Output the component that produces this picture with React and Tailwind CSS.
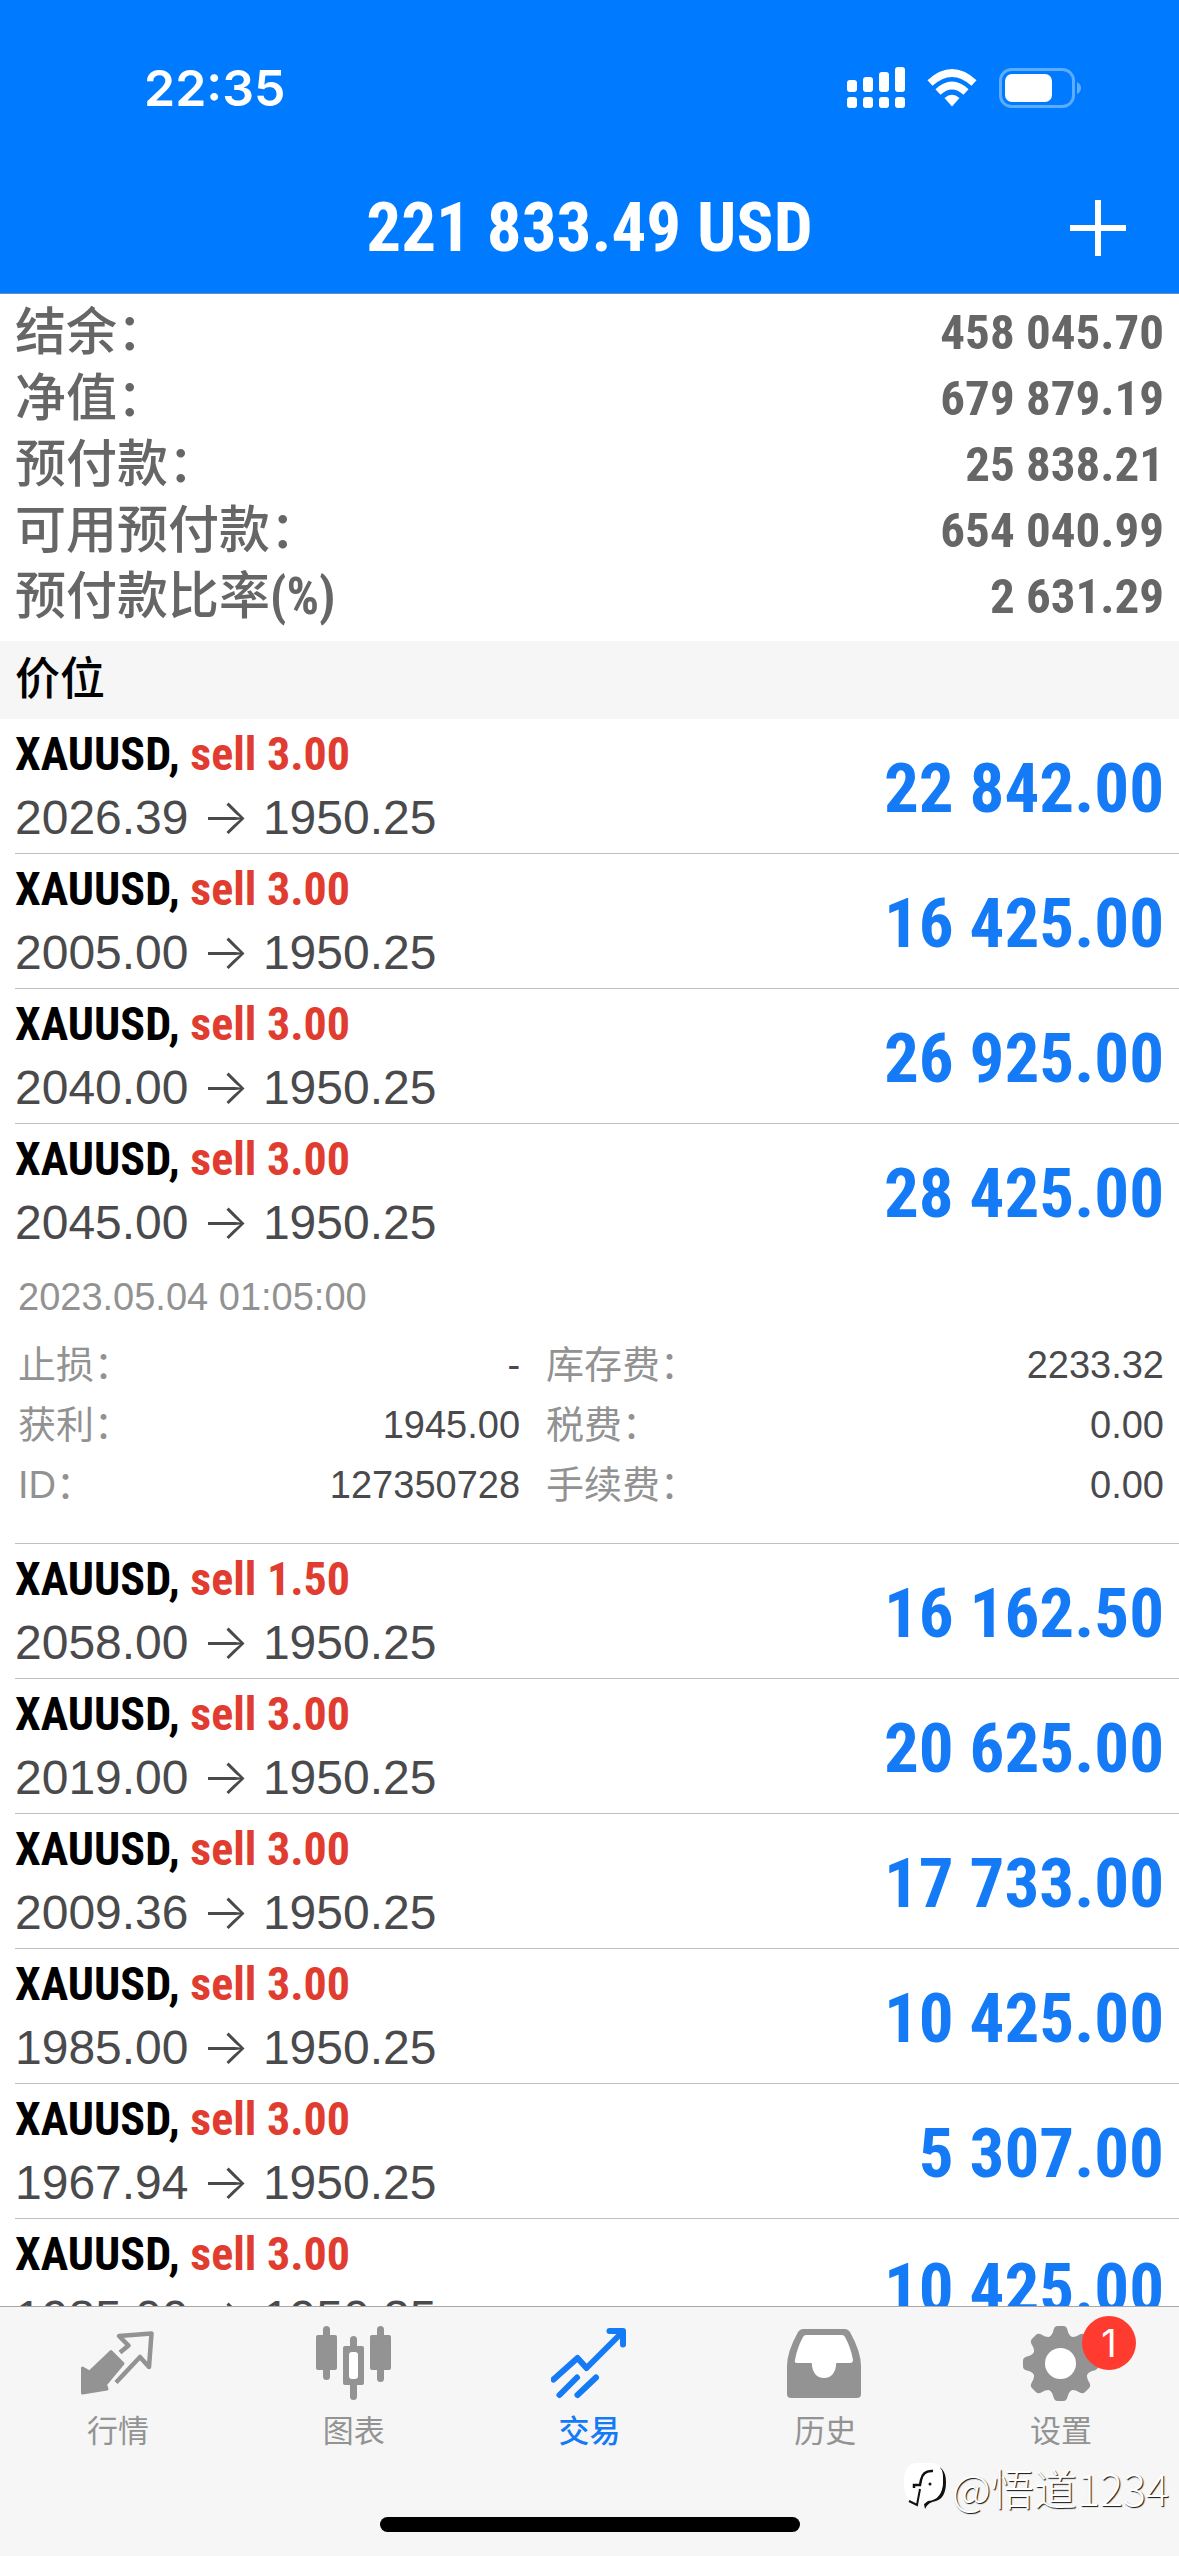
import { clsx } from "clsx";

const account = [
  { label: "结余：", value: "458 045.70" },
  { label: "净值：", value: "679 879.19" },
  { label: "预付款：", value: "25 838.21" },
  { label: "可用预付款：", value: "654 040.99" },
  { label: "预付款比率", unit: "(%)", value: "2 631.29" },
];

const positions = [
  { id: 1, side: "sell 3.00", open: "2026.39", profit: "22 842.00" },
  { id: 2, side: "sell 3.00", open: "2005.00", profit: "16 425.00" },
  { id: 3, side: "sell 3.00", open: "2040.00", profit: "26 925.00" },
  {
    id: 4,
    side: "sell 3.00",
    open: "2045.00",
    profit: "28 425.00",
    time: "2023.05.04 01:05:00",
    details: [
      ["止损：", "-"],
      ["库存费：", "2233.32"],
      ["获利：", "1945.00"],
      ["税费：", "0.00"],
      ["ID：", "127350728"],
      ["手续费：", "0.00"],
    ],
  },
  { id: 5, side: "sell 1.50", open: "2058.00", profit: "16 162.50" },
  { id: 6, side: "sell 3.00", open: "2019.00", profit: "20 625.00" },
  { id: 7, side: "sell 3.00", open: "2009.36", profit: "17 733.00" },
  { id: 8, side: "sell 3.00", open: "1985.00", profit: "10 425.00" },
  { id: 9, side: "sell 3.00", open: "1967.94", profit: "5 307.00" },
  { id: 10, side: "sell 3.00", open: "1985.00", profit: "10 425.00" },
];

const QuotesIcon = () => (
  <svg viewBox="0 0 76 76" className="size-[76px]" fill="none" stroke="currentColor" strokeLinejoin="round">
    <path
      d="M2.5 42 9.5 46 31 25.500 43 37.500 25.500 58.500 27 63 2.500 67Z"
      fill="currentColor"
      strokeWidth="3"
    />
    <path d="M40 26.500 48.500 19.500 39 10 71.500 7.500 69 41 60 31 36 56.500" strokeWidth="4.500" />
  </svg>
);

const ChartIcon = () => (
  <svg viewBox="0 0 76 76" className="size-[76px]" fill="currentColor">
    <rect x="7" y="0" width="7" height="54" rx="3.500" />
    <rect x="0" y="9" width="21" height="35" rx="2" />
    <rect x="34" y="10" width="7" height="64" rx="3.500" />
    <rect x="27" y="20" width="21" height="39" rx="2" />
    <rect x="33" y="26" width="9" height="27" rx="3" fill="white" />
    <rect x="61" y="0" width="7" height="56" rx="3.500" />
    <rect x="54" y="9" width="21" height="35" rx="2" />
  </svg>
);

const TradeIcon = () => (
  <svg
    viewBox="0 0 76 76"
    className="size-[76px]"
    fill="none"
    stroke="currentColor"
    strokeWidth="6"
    strokeLinecap="round"
    strokeLinejoin="round"
  >
    <path d="M2.500 53.500 26.500 32 35.500 42 71.500 6" />
    <path d="M58.500 5H72V18.500" />
    <path d="M8.500 69 26 51.500M26.500 69 45 51.500" />
  </svg>
);

const HistoryIcon = () => (
  <svg viewBox="0 0 76 76" className="size-[76px]" fill="currentColor">
    <path d="M16 3H58Q61 3 63 6 74 26 74 40V68Q74 72 70 72H4Q0 72 0 68V40Q0 26 11 6 13 3 16 3Z" />
    <path
      d="M19 9H55Q57 9 58 11 64 22 66 34 66 37 63 37H49.500Q49 37 49 40 47 52 37 52 27 52 25 40 25 37 24.500 37H10Q7 37 8 34 10 22 16 11 17 9 19 9Z"
      fill="white"
    />
  </svg>
);

const SettingsIcon = () => (
  <svg viewBox="0 0 76 76" className="size-[76px]" fill="currentColor">
    <circle cx="37.500" cy="37.500" r="29" />
    {[0, 45, 90, 135, 180, 225, 270, 315].map((angle) => (
      <path
        key={angle}
        d="M24.500 12.500Q29.500 9.500 30.500 4 31.500 0 34.500 0H40.500Q43.500 0 44.500 4 45.500 9.500 50.500 12.500Z"
        transform={`rotate(${angle} 37.5 37.5)`}
      />
    ))}
    <circle cx="37.500" cy="37.500" r="15.500" fill="white" />
  </svg>
);

const tabs = [
  { label: "行情", Icon: QuotesIcon },
  { label: "图表", Icon: ChartIcon },
  { label: "交易", Icon: TradeIcon, active: true },
  { label: "历史", Icon: HistoryIcon },
  { label: "设置", Icon: SettingsIcon, badge: 1 },
];

const StatusBar = () => (
  <div className="flex items-center justify-between pt-[56px] pr-24 pl-36">
    <span className="font-['Inter','Noto_Sans_CJK_SC',sans-serif] text-[50px] leading-[64px] font-semibold">
      22:35
    </span>
    <div className="flex items-center gap-[22px]">
      <svg viewBox="0 0 58 42" className="h-[42px] w-[58px]" fill="currentColor">
        <rect x="0" y="13" width="10" height="12" rx="3" />
        <rect x="16" y="10" width="10" height="15" rx="3" />
        <rect x="32" y="5" width="10" height="20" rx="3" />
        <rect x="48" y="0" width="10" height="25" rx="3" />
        <rect x="0" y="30" width="10" height="11" rx="3" />
        <rect x="16" y="30" width="10" height="11" rx="3" />
        <rect x="32" y="30" width="10" height="11" rx="3" />
        <rect x="48" y="30" width="10" height="11" rx="3" />
      </svg>
      <svg viewBox="0 0 50 38" className="h-[38px] w-[50px]" fill="none" stroke="currentColor" strokeWidth="7.500">
        <path d="M3 14Q25 -6 47 14" />
        <path d="M11 23Q25 10 39 23" />
        <path d="M17.500 29Q25 22.500 32.500 29L25 37.500Z" fill="currentColor" stroke="none" />
      </svg>
      <svg viewBox="0 0 84 40" className="h-[40px] w-[84px]">
        <rect x="1.500" y="1.500" width="73" height="37" rx="11" fill="none" stroke="#5cacff" strokeWidth="3" />
        <rect x="6" y="6" width="47" height="28" rx="7" fill="white" />
        <path d="M78 14Q82 16 82 20 82 24 78 26Z" fill="#5cacff" />
      </svg>
    </div>
  </div>
);

const Position = ({ side, open, profit, time, details }) => (
  <li className="ml-[15px] border-b border-[#c0c0c4] pt-[3px] pr-[15px]">
    <div className="flex justify-between">
      <div>
        <p className="font-['Roboto_Condensed','Liberation_Sans_Narrow',sans-serif] text-[46px] leading-[64px] font-bold text-black">
          XAUUSD, <span className="text-[#e03c2f]">{side}</span>
        </p>
        <p className="text-[48px] leading-[64px] text-[#4a4a4c]">
          {open} <span className="font-['Inter',sans-serif] text-[50px] leading-none font-light">→</span> 1950.25
        </p>
      </div>
      <p className="pt-[3px] font-['Roboto_Condensed','Liberation_Sans_Narrow',sans-serif] text-[69px] leading-[128px] font-bold text-[#147af5]">
        {profit}
      </p>
    </div>

    {details && (
      <div className="pt-[9px] pb-7 pl-[3px] text-[38px] leading-[60px] text-[#929292]">
        <p>{time}</p>
        <dl className="mt-2 grid grid-cols-[13fr_16fr] gap-x-[26px]">
          {details.map(([label, value]) => (
            <div key={label} className="flex justify-between">
              <dt>{label}</dt>
              <dd className="text-[#4a4a4c]">{value}</dd>
            </div>
          ))}
        </dl>
      </div>
    )}
  </li>
);

const Watermark = () => (
  <div className="absolute right-[10px] bottom-[44px] flex items-center gap-1 text-white">
    <svg viewBox="0 0 44 50" className="h-[50px] w-[44px]">
      <path
        d="M14 3H28Q42 4 42 20 42 36 32 39 24 40 21 47L20 42 23 38Q36 37 38 27 40 18 38 8Z"
        fill="#111"
      />
      <path d="M13 1H27Q39 1 39 18 39 38 24 39L20 42 6 38Q0 35 0 20 0 1 13 1Z" fill="white" />
      <path d="M29 9Q19 8 17 18L16 23H10V26" fill="none" stroke="#111" strokeWidth="2.500" />
      <path d="M16 27 13 43 5 39" fill="none" stroke="#111" strokeWidth="2" />
      <circle cx="26" cy="22" r="1.500" fill="#111" />
    </svg>
    <span className="font-['Noto_Sans_CJK_SC',sans-serif] text-[43px] leading-[50px] font-light [text-shadow:1px_1px_1px_#111]">
      @悟道1234
    </span>
  </div>
);

const App = () => {
  return (
    <div
      lang="zh-CN"
      className="flex h-screen flex-col bg-white font-['Liberation_Sans','Noto_Sans_CJK_SC',sans-serif]"
    >
      <header className="border-b border-[#5b8fc9] bg-[#007aff] pb-[17px] text-white">
        <StatusBar />
        <div className="grid grid-cols-[1fr_auto_1fr] items-center pt-[60px] pr-[53px] pl-[53px]">
          <h1 className="col-start-2 font-['Roboto_Condensed','Liberation_Sans_Narrow',sans-serif] text-[69px] leading-[96px] font-bold">
            221 833.49 USD
          </h1>
          <button type="button" aria-label="新订单" className="justify-self-end">
            <svg viewBox="0 0 56 56" className="size-[56px]" stroke="currentColor" strokeWidth="6">
              <path d="M28 0V56M0 28H56" />
            </svg>
          </button>
        </div>
      </header>

      <main className="min-h-0 flex-1 overflow-y-auto [scrollbar-width:none]">
        <dl className="px-[15px] pt-[6px] pb-[11px] text-[#666]">
          {account.map(({ label, unit, value }) => (
            <div key={label} className="flex justify-between leading-[66px]">
              <dt className="font-['Roboto_Condensed','Noto_Sans_CJK_SC',sans-serif] text-[51px] font-medium">
                {label}
                {unit && <span className="font-bold">{unit}</span>}
              </dt>
              <dd className="font-['Roboto_Condensed','Liberation_Sans_Narrow',sans-serif] text-[49px] font-bold">
                {value}
              </dd>
            </div>
          ))}
        </dl>

        <h2 className="bg-[#f6f6f6] px-[15px] text-[45px] leading-[78px] font-medium text-black">价位</h2>

        <ul>
          {positions.map((position) => (
            <Position key={position.id} {...position} />
          ))}
        </ul>
      </main>

      <footer className="relative border-t border-[#a8a8a8] bg-[#f6f6f6] pt-[19px]">
        <nav className="grid grid-cols-5">
          {tabs.map(({ label, Icon, active, badge }) => (
            <a
              key={label}
              href="#"
              aria-current={active ? "page" : undefined}
              className={clsx(
                "flex flex-col items-center gap-[10px]",
                active ? "font-medium text-[#147af5]" : "text-[#939393]"
              )}
            >
              <span className="relative">
                <Icon />
                {badge && (
                  <span className="absolute -top-[10px] left-[59px] size-[54px] rounded-full bg-[#ff3b30] text-center font-['Inter',sans-serif] text-[38px] leading-[54px] text-white">
                    {badge}
                  </span>
                )}
              </span>
              <span className="text-[31px] leading-[40px]">{label}</span>
            </a>
          ))}
        </nav>
        <div className="mx-auto mt-[65px] mb-6 h-[15px] w-[420px] rounded-full bg-black" />
        <Watermark />
      </footer>
    </div>
  );
};

export default App;
